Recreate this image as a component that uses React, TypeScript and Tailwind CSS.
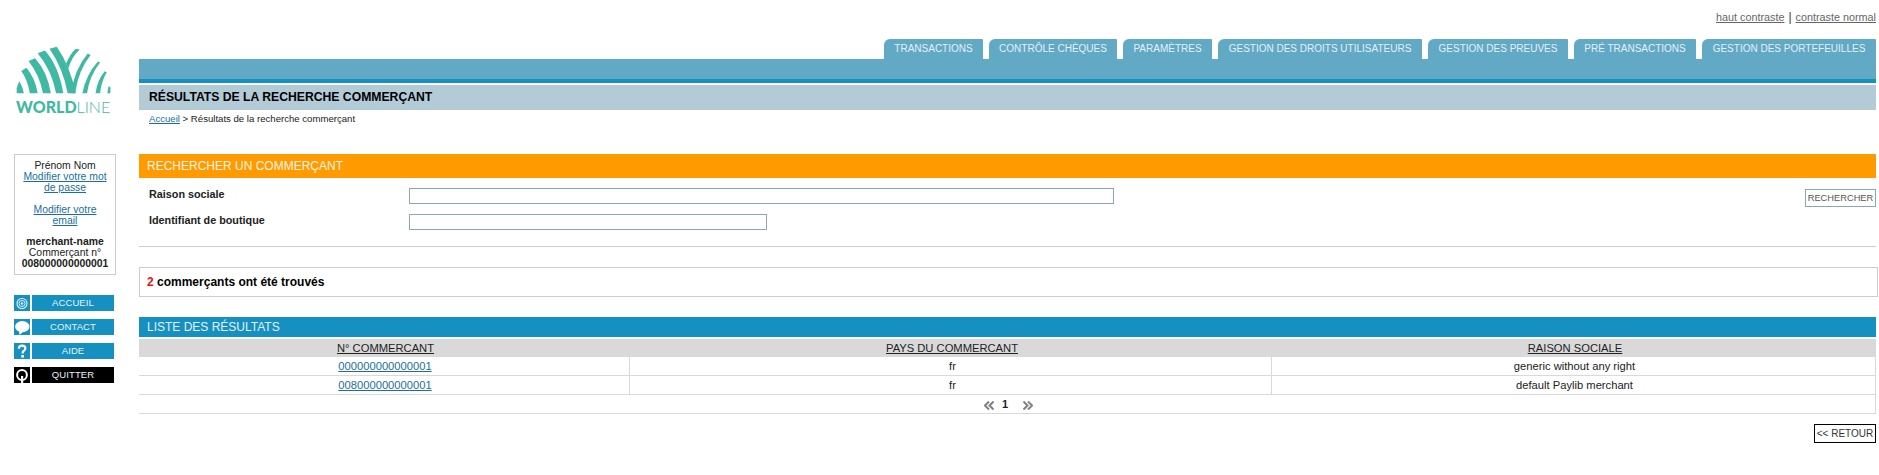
const font = "font-['Liberation_Sans',Arial,sans-serif]";

function Logo() {
  return (
    <div className="w-[96px] ml-[2px]">
      <svg width="96" height="48" viewBox="48 136 288 146" className="block">
        <g fill="#3fb9a3">
          <path d="M48 280 L48 265 Q52 250 56 243 Q66 258 70 280 Z" />
          <path d="M62 212 L78 202 Q105 235 112 280 L88 280 Q82 240 62 212 Z" />
          <path d="M84 182 L104 173 Q142 215 152 280 L128 280 Q118 225 84 182 Z" />
          <path d="M112 158 L134 150 Q175 195 190 280 L168 280 Q155 210 112 158 Z" />
          <path d="M148 144 L170 138 Q210 195 228 280 L203 280 Q190 205 148 144 Z" />
          <path d="M228 144 L240 147 Q215 170 205 205 L198 190 Q210 160 228 144 Z" />
          <path d="M264 159 L273 163 Q235 210 226 280 L214 280 Q222 210 264 159 Z" />
          <path d="M295 183 L302 186 Q270 225 262 280 L248 280 Q258 225 295 183 Z" />
          <path d="M316 213 L322 216 Q305 245 302 280 L288 280 Q293 240 316 213 Z" />
          <path d="M328 258 L333 262 L333 280 L324 280 Q325 268 328 258 Z" />
        </g>
      </svg>
      <div className="mt-[5px] h-[15px] leading-[15px] text-[16px] whitespace-nowrap text-[#3fb9a3] font-['Lato',sans-serif]">
        <span className="font-black">WORLD</span>
        <span className="font-light">LINE</span>
      </div>
    </div>
  );
}

function TargetIcon() {
  return (
    <svg width="16" height="16" viewBox="0 0 16 16">
      <circle cx="8" cy="8.5" r="5" fill="none" stroke="#fff" strokeWidth="1.1" opacity="0.9" />
      <circle cx="8" cy="8.5" r="3" fill="none" stroke="#fff" strokeWidth="1" opacity="0.85" />
      <circle cx="8" cy="8.5" r="1.2" fill="#fff" opacity="0.9" />
    </svg>
  );
}
function BubbleIcon() {
  return (
    <svg width="16" height="16" viewBox="0 0 16 16">
      <ellipse cx="8.3" cy="7.6" rx="7.2" ry="5.6" fill="#fff" />
      <path d="M5 11 L5.5 16 L10 12 Z" fill="#fff" />
    </svg>
  );
}
function HelpIcon() {
  return (
    <svg width="16" height="16" viewBox="0 0 16 16">
      <path d="M4.8 5.6 Q5 2.6 8.2 2.6 Q11.4 2.6 11.4 5.3 Q11.4 7 9.6 8 Q8.6 8.6 8.6 10.4" fill="none" stroke="#fff" strokeWidth="2.2" />
      <rect x="7.3" y="12" width="2.6" height="2.6" fill="#fff" />
    </svg>
  );
}
function QuitIcon() {
  return (
    <svg width="16" height="16" viewBox="0 0 16 16">
      <circle cx="8" cy="8" r="4.9" fill="none" stroke="#fff" strokeWidth="2" />
      <rect x="7" y="9" width="2.2" height="7" fill="#fff" />
    </svg>
  );
}

function NavItem({ icon, label, black }: { icon: React.ReactNode; label: string; black?: boolean }) {
  const bg = black ? "bg-black" : "bg-[#1690c0]";
  return (
    <div className="flex gap-[2px] h-[16px]">
      <div className={`w-[16px] h-[16px] ${bg}`}>{icon}</div>
      <div className={`w-[82px] h-[16px] ${bg} text-[#e8f3f8] text-[9.5px] leading-[16px] text-center tracking-[0.1px]`}>{label}</div>
    </div>
  );
}

function Tab({ label, width }: { label: string; width: string }) {
  return (
    <div className={`${width} h-[20px] bg-[#62a9c6] rounded-tl-[6px] rounded-tr-[1px] text-[#e4f0f6] text-[10px] leading-[19px] whitespace-nowrap text-center`}>
      {label}
    </div>
  );
}

const link = "text-[#1a6f9e] underline";

function Row({ a, b, c }: { a: string; b: string; c: string }) {
  return (
    <div className="grid grid-cols-[491px_642px_604px] h-[19px] border-b border-[#d9d9d9] text-[11.2px] leading-[18px] text-center text-[#222]">
      <div className="border-r border-[#d9d9d9] pl-[2px]"><a className={link}>{a}</a></div>
      <div className="border-r border-[#d9d9d9] pl-[4px]">{b}</div>
      <div className="border-r border-[#d9d9d9] pl-[2px]">{c}</div>
    </div>
  );
}

export default function App() {
  return (
    <div className={`${font} flex w-[1879px] min-h-[475px] bg-white text-[#222] overflow-hidden`}>
      <aside className="w-[139px] shrink-0 pl-[14px]">
        <div className="h-[154px] pt-[46px]">
          <Logo />
        </div>
        <div className="w-[102px] h-[121px] border border-[#ccc] box-border pt-[5px] text-[10.4px] leading-[11px] text-center">
          <div>Prénom Nom</div>
          <a className={`${link} block px-[6px]`}>Modifier votre mot de passe</a>
          <div className="h-[11px]" />
          <a className={`${link} block px-[12px]`}>Modifier votre email</a>
          <div className="h-[10px]" />
          <div className="font-bold">merchant-name</div>
          <div>Commerçant n°</div>
          <div className="font-bold">008000000000001</div>
        </div>
        <div className="mt-[20px] flex flex-col gap-[8px]">
          <NavItem icon={<TargetIcon />} label="ACCUEIL" />
          <NavItem icon={<BubbleIcon />} label="CONTACT" />
          <NavItem icon={<HelpIcon />} label="AIDE" />
          <NavItem icon={<QuitIcon />} label="QUITTER" black />
        </div>
      </aside>

      <main className="w-[1737px] shrink-0">
        <div className="h-[39px] pt-[10px] flex justify-end items-start text-[10.8px] leading-[14px] text-[#666]">
          <a className="underline">haut contraste</a>
          <span className="mx-[4px] text-[#333] text-[12px]">|</span>
          <a className="underline">contraste normal</a>
        </div>
        <div className="flex justify-end gap-[6px]">
          <Tab label="TRANSACTIONS" width="w-[99px]" />
          <Tab label="CONTRÔLE CHÈQUES" width="w-[128px]" />
          <Tab label="PARAMÈTRES" width="w-[89px]" />
          <Tab label="GESTION DES DROITS UTILISATEURS" width="w-[204px]" />
          <Tab label="GESTION DES PREUVES" width="w-[140px]" />
          <Tab label="PRÉ TRANSACTIONS" width="w-[122px]" />
          <Tab label="GESTION DES PORTEFEUILLES" width="w-[174px]" />
        </div>
        <div className="h-[24px] bg-[#62a9c6] border-b-4 border-[#1690c0]" />
        <div className="mt-[2px] h-[25px] bg-[#b3cbd7] pl-[10px] text-[12.2px] leading-[25px] font-bold text-black">
          RÉSULTATS DE LA RECHERCHE COMMERÇANT
        </div>
        <div className="h-[44px] pl-[10px] pt-[2px] text-[9.6px] leading-[14px]">
          <a className={link}>Accueil</a> &gt; Résultats de la recherche commerçant
        </div>

        <div className="h-[24px] bg-[#ff9a00] pl-[8px] text-[12px] leading-[24px] text-[#fff6e8]">RECHERCHER UN COMMERÇANT</div>
        <div className="h-[69px] border-b border-[#ccc] flex">
          <div className="w-[270px] pl-[10px] pt-[10px] text-[10.8px] font-bold leading-[12px]">
            <div className="h-[26px]">Raison sociale</div>
            <div>Identifiant de boutique</div>
          </div>
          <div className="flex-1 pt-[10px]">
            <div className="w-[705px] h-[16px] border border-[#8aa8b4]" />
            <div className="mt-[10px] w-[358px] h-[16px] border border-[#8aa8b4]" />
          </div>
          <div className="pt-[11px]">
            <div className="w-[71px] h-[18px] border border-[#8aa8b4] text-[9.3px] leading-[16px] text-center text-[#555]">RECHERCHER</div>
          </div>
        </div>

        <div className="mt-[20px] w-[1739px] h-[30px] border border-[#ccc] pl-[7px] text-[12px] leading-[28px] font-bold text-black">
          <span className="text-[#f01010]">2</span> commerçants ont été trouvés
        </div>

        <div className="mt-[20px] h-[20px] bg-[#1690c0] pl-[8px] text-[12px] leading-[20px] text-[#e4f0f6]">LISTE DES RÉSULTATS</div>
        <div className="mt-[2px] grid grid-cols-[491px_642px_604px] h-[18px] bg-[#d9d9d9] text-[11.2px] leading-[18px] text-center text-[#222]">
          <div className="underline pl-[2px]">N° COMMERCANT</div>
          <div className="underline pl-[2px]">PAYS DU COMMERCANT</div>
          <div className="underline pl-[2px]">RAISON SOCIALE</div>
        </div>
        <Row a="000000000000001" b="fr" c="generic without any right" />
        <Row a="008000000000001" b="fr" c="default Paylib merchant" />
        <div className="h-[19px] border-b border-r border-[#d9d9d9] flex items-center pl-[845px] text-[11px] font-bold leading-[18px]">
          <svg width="10" height="9" viewBox="0 0 10 9" className="mt-[2px]">
            <path d="M5 0.5 L1 4.5 L5 8.5 M9.5 0.5 L5.5 4.5 L9.5 8.5" fill="none" stroke="#808080" strokeWidth="2" />
          </svg>
          <span className="ml-[8px] mr-[15px] -mt-[1px]">1</span>
          <svg width="10" height="9" viewBox="0 0 10 9" className="mt-[2px]">
            <path d="M0.5 0.5 L4.5 4.5 L0.5 8.5 M5 0.5 L9 4.5 L5 8.5" fill="none" stroke="#808080" strokeWidth="2" />
          </svg>
        </div>
        <div className="mt-[10px] flex justify-end">
          <div className="w-[62px] h-[19px] border border-black text-[10px] leading-[17px] text-center text-[#333]">&lt;&lt; RETOUR</div>
        </div>
      </main>
    </div>
  );
}
